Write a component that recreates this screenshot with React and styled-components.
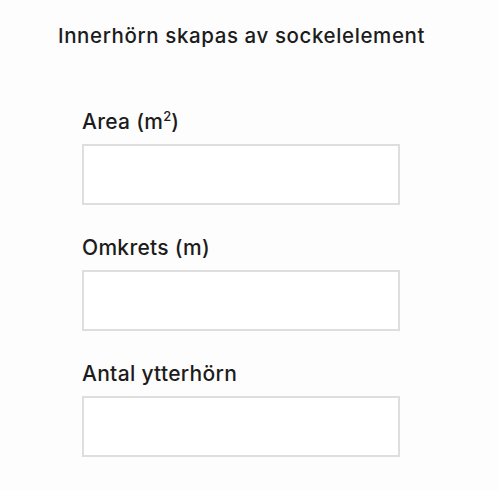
import React from "react";
import styled, { createGlobalStyle } from "styled-components";

const GlobalStyle = createGlobalStyle`
  html, body {
    margin: 0;
    padding: 0;
    background: #fdfdfd;
  }
  body {
    font-family: Inter, "Liberation Sans", Arial, sans-serif;
    color: #1c1c1c;
  }
`;

const Page = styled.div`
  padding: 24px 0 0 58px;
  min-height: 490px;
  box-sizing: border-box;
`;

const Heading = styled.h2`
  margin: 0;
  font-size: 20.5px;
  line-height: 24px;
  font-weight: 500;
  letter-spacing: 0.6px;
`;

const Form = styled.div`
  display: flex;
  flex-direction: column;
  gap: 31px;
  margin-top: 62px;
  padding-left: 24px;
`;

const Field = styled.div`
  display: flex;
  flex-direction: column;
  gap: 10px;
`;

const Label = styled.label`
  font-size: 21px;
  line-height: 24px;
  font-weight: 500;
  letter-spacing: 0.3px;
`;

const Sup = styled.sup`
  font-size: 13px;
  line-height: 0;
  vertical-align: 8px;
  letter-spacing: 0;
`;

const Input = styled.input`
  box-sizing: border-box;
  width: 318px;
  height: 61px;
  margin: 0;
  border: 2px solid #dedede;
  border-radius: 0;
  background: #ffffff;
  outline: none;
`;

const fields = [
  { id: "area", label: <>Area (m<Sup>2</Sup>)</> },
  { id: "omkrets", label: "Omkrets (m)" },
  { id: "ytterhorn", label: "Antal ytterhörn" },
];

export default function App() {
  return (
    <>
      <GlobalStyle />
      <Page>
        <Heading>Innerhörn skapas av sockelelement</Heading>
        <Form>
          {fields.map((f) => (
            <Field key={f.id}>
              <Label htmlFor={f.id}>{f.label}</Label>
              <Input id={f.id} type="text" />
            </Field>
          ))}
        </Form>
      </Page>
    </>
  );
}
